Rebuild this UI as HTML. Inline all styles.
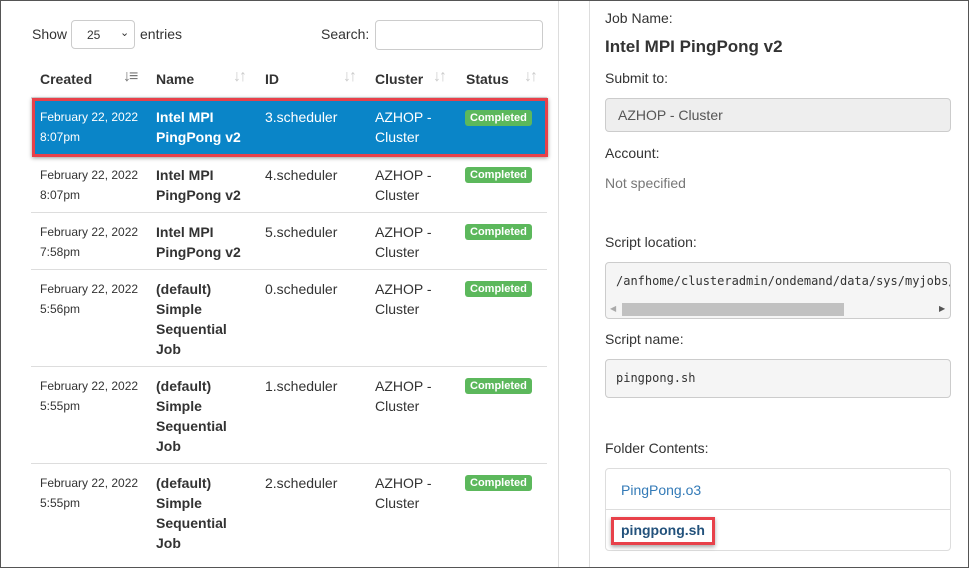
<!DOCTYPE html>
<html><head><style>
*{box-sizing:border-box;margin:0;padding:0}
body{width:969px;height:568px;overflow:hidden;background:#fff;font-family:"Liberation Sans",Arial,sans-serif;color:#333;position:relative;font-size:14px}
.a{position:absolute}
.frame{position:absolute;left:0;top:0;width:969px;height:568px;border:1px solid #555;pointer-events:none}
.hd{font-weight:bold;font-size:14px;color:#333}
.sort{color:#ccc;font-size:16px;font-weight:bold;letter-spacing:-2px}
.date{font-size:12px;line-height:20px}
.nm{font-weight:bold;line-height:20px}
.t{line-height:20px}
.badge{background:#5cb85c;color:#fff;font-size:11px;font-weight:bold;border-radius:3px;padding:1px 5px;line-height:14px}
.hl{left:31px;width:516px;height:1px;background:#ddd}
.lbl{font-size:14px;color:#333}
.box{background:#eee;border:1px solid #ccc;border-radius:4px}
</style></head><body>
<div class="a" style="left:558px;top:0;width:1px;height:568px;background:#ddd"></div>
<div class="a" style="left:589px;top:0;width:1px;height:568px;background:#ddd"></div>
<div class="a" style="left:32px;top:26px">Show</div>
<div class="a" style="left:71px;top:20px;width:64px;height:29px;border:1px solid #ccc;border-radius:4px;font-size:12px;padding:7px 0 0 15px">25<span style="position:absolute;left:48px;top:5px;font-size:11px">&#8964;</span></div>
<div class="a" style="left:140px;top:26px">entries</div>
<div class="a" style="left:321px;top:26px">Search:</div>
<div class="a" style="left:375px;top:20px;width:168px;height:30px;border:1px solid #ccc;border-radius:4px"></div>

<div class="a hd" style="left:40px;top:71px">Created</div><div class="a sort" style="left:123px;top:68px;color:#777">&#8595;&#8801;</div>
<div class="a hd" style="left:156px;top:71px">Name</div><div class="a sort" style="left:233px;top:68px">&#8595;&#8593;</div>
<div class="a hd" style="left:265px;top:71px">ID</div><div class="a sort" style="left:343px;top:68px">&#8595;&#8593;</div>
<div class="a hd" style="left:375px;top:71px">Cluster</div><div class="a sort" style="left:433px;top:68px">&#8595;&#8593;</div>
<div class="a hd" style="left:466px;top:71px">Status</div><div class="a sort" style="left:524px;top:68px">&#8595;&#8593;</div>
<div class="a hl" style="top:97px;height:2px"></div>

<div class="a" style="left:32px;top:98px;width:516px;height:59px;background:#0a85c8;border:3px solid #e8414a;box-shadow:0 1px 4px rgba(0,0,0,.4)"></div>
<div class="a date" style="left:40px;top:107px;color:#fff">February 22, 2022<br>8:07pm</div>
<div class="a nm" style="left:156px;top:107px;color:#fff">Intel MPI<br>PingPong v2</div>
<div class="a t" style="left:265px;top:107px;color:#fff">3.scheduler</div>
<div class="a t" style="left:375px;top:107px;color:#fff">AZHOP -<br>Cluster</div>
<div class="a badge" style="left:465px;top:110px">Completed</div>

<div class="a hl" style="top:212px"></div>
<div class="a hl" style="top:269px"></div>
<div class="a hl" style="top:366px"></div>
<div class="a hl" style="top:463px"></div>

<div class="a date" style="left:40px;top:165px">February 22, 2022<br>8:07pm</div>
<div class="a nm" style="left:156px;top:165px">Intel MPI<br>PingPong v2</div>
<div class="a t" style="left:265px;top:165px">4.scheduler</div>
<div class="a t" style="left:375px;top:165px">AZHOP -<br>Cluster</div>
<div class="a badge" style="left:465px;top:167px">Completed</div>

<div class="a date" style="left:40px;top:222px">February 22, 2022<br>7:58pm</div>
<div class="a nm" style="left:156px;top:222px">Intel MPI<br>PingPong v2</div>
<div class="a t" style="left:265px;top:222px">5.scheduler</div>
<div class="a t" style="left:375px;top:222px">AZHOP -<br>Cluster</div>
<div class="a badge" style="left:465px;top:224px">Completed</div>

<div class="a date" style="left:40px;top:279px">February 22, 2022<br>5:56pm</div>
<div class="a nm" style="left:156px;top:279px">(default)<br>Simple<br>Sequential<br>Job</div>
<div class="a t" style="left:265px;top:279px">0.scheduler</div>
<div class="a t" style="left:375px;top:279px">AZHOP -<br>Cluster</div>
<div class="a badge" style="left:465px;top:281px">Completed</div>

<div class="a date" style="left:40px;top:376px">February 22, 2022<br>5:55pm</div>
<div class="a nm" style="left:156px;top:376px">(default)<br>Simple<br>Sequential<br>Job</div>
<div class="a t" style="left:265px;top:376px">1.scheduler</div>
<div class="a t" style="left:375px;top:376px">AZHOP -<br>Cluster</div>
<div class="a badge" style="left:465px;top:378px">Completed</div>

<div class="a date" style="left:40px;top:473px">February 22, 2022<br>5:55pm</div>
<div class="a nm" style="left:156px;top:473px">(default)<br>Simple<br>Sequential<br>Job</div>
<div class="a t" style="left:265px;top:473px">2.scheduler</div>
<div class="a t" style="left:375px;top:473px">AZHOP -<br>Cluster</div>
<div class="a badge" style="left:465px;top:475px">Completed</div>

<div class="a lbl" style="left:605px;top:10px">Job Name:</div>
<div class="a" style="left:605px;top:37px;font-size:17px;font-weight:bold">Intel MPI PingPong v2</div>
<div class="a lbl" style="left:605px;top:70px">Submit to:</div>
<div class="a box" style="left:605px;top:98px;width:346px;height:34px;padding:8px 12px;color:#555">AZHOP - Cluster</div>
<div class="a lbl" style="left:605px;top:145px">Account:</div>
<div class="a" style="left:605px;top:175px;color:#777">Not specified</div>
<div class="a lbl" style="left:605px;top:234px">Script location:</div>
<div class="a box" style="left:605px;top:262px;width:346px;height:57px;background:#f5f5f5;overflow:hidden">
<div style="position:absolute;left:10px;top:11px;font-family:'DejaVu Sans Mono',monospace;font-size:12px;white-space:nowrap;color:#333">/anfhome/clusteradmin/ondemand/data/sys/myjobs/</div>
<div style="position:absolute;left:16px;top:40px;width:222px;height:13px;background:#c1c1c1"></div>
<div style="position:absolute;left:4px;top:41px;font-size:8px;color:#aaa">&#9664;</div>
<div style="position:absolute;left:333px;top:41px;font-size:8px;color:#555">&#9654;</div>
</div>
<div class="a lbl" style="left:605px;top:331px">Script name:</div>
<div class="a box" style="left:605px;top:359px;width:346px;height:39px;background:#f5f5f5;padding:11px 10px;font-family:'DejaVu Sans Mono',monospace;font-size:12px">pingpong.sh</div>
<div class="a lbl" style="left:605px;top:440px">Folder Contents:</div>
<div class="a" style="left:605px;top:468px;width:346px;height:83px;border:1px solid #ddd;border-radius:4px"></div>
<div class="a" style="left:606px;top:509px;width:344px;height:1px;background:#ddd"></div>
<div class="a" style="left:621px;top:482px;color:#337ab7">PingPong.o3</div>
<div class="a" style="left:611px;top:517px;width:104px;height:28px;border:3px solid #e8414a;box-shadow:0 2px 4px rgba(0,0,0,.35)"></div>
<div class="a" style="left:621px;top:522px;color:#23527c;font-weight:bold">pingpong.sh</div>
<div class="frame"></div>
</body></html>
